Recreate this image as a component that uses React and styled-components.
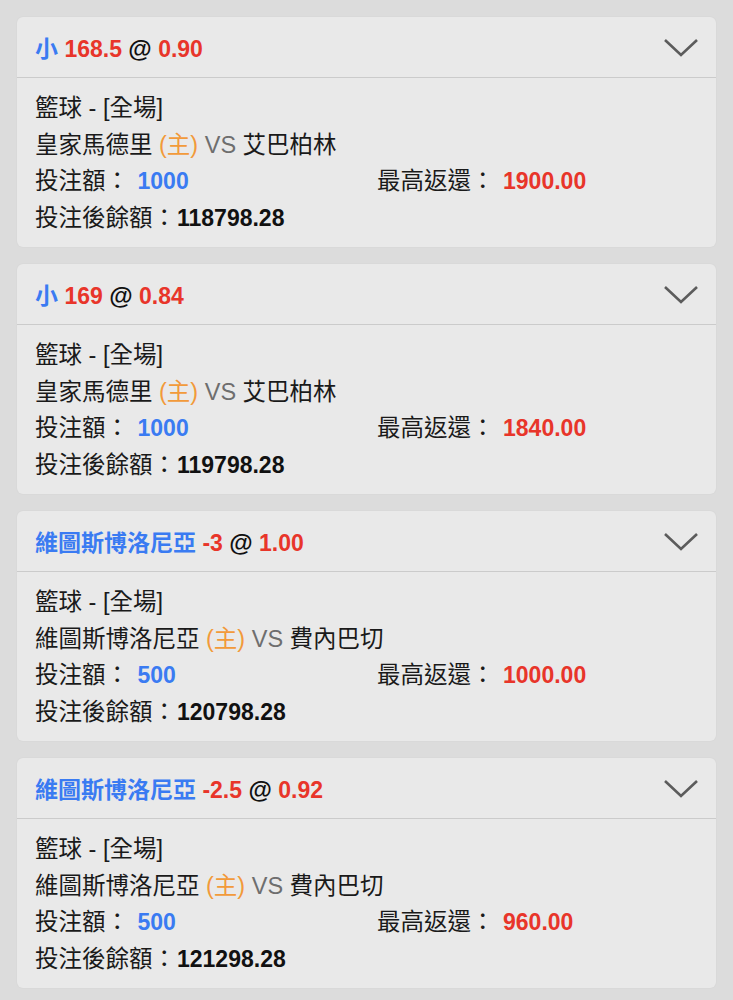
import React from 'react'
import styled, { createGlobalStyle } from 'styled-components'

const bets = [
  { pick: '小', line: '168.5', odds: '0.90', home: '皇家馬德里', away: '艾巴柏林', stake: '1000', max: '1900.00', balance: '118798.28' },
  { pick: '小', line: '169', odds: '0.84', home: '皇家馬德里', away: '艾巴柏林', stake: '1000', max: '1840.00', balance: '119798.28' },
  { pick: '維圖斯博洛尼亞', line: '-3', odds: '1.00', home: '維圖斯博洛尼亞', away: '費內巴切', stake: '500', max: '1000.00', balance: '120798.28' },
  { pick: '維圖斯博洛尼亞', line: '-2.5', odds: '0.92', home: '維圖斯博洛尼亞', away: '費內巴切', stake: '500', max: '960.00', balance: '121298.28' },
]

function App() {
  return (
    <>
      <GlobalStyle />
      <Page>
        {bets.map((b, i) => (
          <Card key={i}>
            <Header>
              <Title>
                <Blue>{b.pick}</Blue> <Red>{b.line}</Red> <At>@</At> <Red>{b.odds}</Red>
              </Title>
              <Chevron width="36" height="20" viewBox="0 0 36 20">
                <polyline points="2,3 18,18 34,3" fill="none" stroke="#5c5c5c" strokeWidth="2.6" />
              </Chevron>
            </Header>
            <Body>
              <Line>籃球 - [全場]</Line>
              <Line>
                {b.home} <Orange>(主)</Orange> <Gray>VS</Gray> {b.away}
              </Line>
              <Row>
                <Line>投注額： <Value $color="#3a7bf2">{b.stake}</Value></Line>
                <Line>最高返還： <Value $color="#e8352a">{b.max}</Value></Line>
              </Row>
              <Line>投注後餘額：<Value $color="#111" $tight>{b.balance}</Value></Line>
            </Body>
          </Card>
        ))}
      </Page>
    </>
  )
}

const GlobalStyle = createGlobalStyle`
  body {
    margin: 0;
    background: #dcdcdc;
    font-family: "Liberation Sans", "Noto Sans CJK TC", sans-serif;
  }
`

const Page = styled.div`
  display: flex;
  flex-direction: column;
  gap: 17px;
  padding: 17px;
`

const Card = styled.div`
  background: #e9e9e9;
  border-radius: 6px;
  box-shadow: 0 0 2px rgba(0, 0, 0, 0.06);
  overflow: hidden;
`

const Header = styled.div`
  box-sizing: border-box;
  height: 61px;
  display: flex;
  align-items: center;
  justify-content: space-between;
  padding: 0 17px 0 18px;
  border-bottom: 1px solid #cbcbcb;
`

const Title = styled.div`
  font-size: 23px;
  font-weight: bold;
  color: #111;
`

const At = styled.span`
  font-size: 24px;
`

const Chevron = styled.svg`
  display: block;
`

const Body = styled.div`
  padding: 12px 18px 11px;
  font-size: 23.5px;
  color: #1a1a1a;
`

const Line = styled.div`
  line-height: 36.5px;
  white-space: nowrap;
`

const Row = styled.div`
  display: grid;
  grid-template-columns: 342px 1fr;
`

const Value = styled.span`
  font-weight: bold;
  font-size: 23px;
  color: ${props => props.$color};
  margin-left: ${props => (props.$tight ? '1px' : '2px')};
`

const Blue = styled.span`
  color: #3a7bf2;
`

const Red = styled.span`
  color: #e8352a;
`

const Orange = styled.span`
  color: #f29a3a;
`

const Gray = styled.span`
  color: #6e6e6e;
`

export default App
